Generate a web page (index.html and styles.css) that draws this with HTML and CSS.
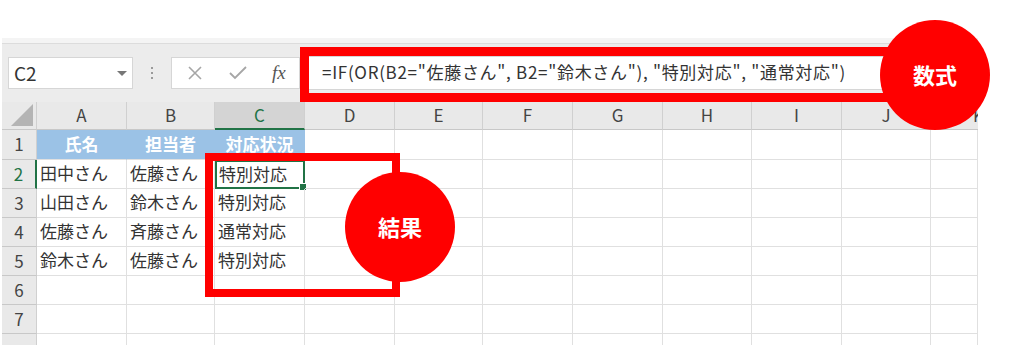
FILE: index.html
```html
<!DOCTYPE html>
<html lang="ja">
<head>
    <meta charset="UTF-8">
    <title>IF OR 数式</title>
    <link rel="stylesheet" href="styles.css">
</head>
<body>
    <div class="stage">
        <div class="sheet">
            <div class="ribbon-edge"></div>

            <div class="toolbar">
                <div class="name-box">
                    <span>C2</span>
                    <span class="name-arrow"></span>
                </div>
                <div class="grip"><i></i><i></i><i></i></div>
                <div class="fx-buttons">
                    <svg class="fx-icon" width="14" height="14" viewBox="0 0 14 14">
                        <path d="M1 1 L13 13 M13 1 L1 13" stroke="#a6a6a6" stroke-width="1.6" fill="none"/>
                    </svg>
                    <svg class="fx-icon" width="18" height="14" viewBox="0 0 18 14">
                        <path d="M1 7 L6 12 L17 1" stroke="#a6a6a6" stroke-width="1.8" fill="none"/>
                    </svg>
                    <span class="fx-label">fx</span>
                </div>
                <div class="formula-input">=IF(OR(B2="佐藤さん", B2="鈴木さん"), "特別対応", "通常対応")</div>
            </div>

            <div class="grid">
                <div class="corner"><span class="corner-tri"></span></div>
                <div class="col-head">A</div>
                <div class="col-head">B</div>
                <div class="col-head active">C</div>
                <div class="col-head">D</div>
                <div class="col-head">E</div>
                <div class="col-head">F</div>
                <div class="col-head">G</div>
                <div class="col-head">H</div>
                <div class="col-head">I</div>
                <div class="col-head">J</div>
                <div class="col-head clipped"><span>K</span></div>

                <div class="row-head">1</div>
                <div class="cell title-cell">氏名</div>
                <div class="cell title-cell">担当者</div>
                <div class="cell title-cell">対応状況</div>
                <div class="cell"></div><div class="cell"></div><div class="cell"></div><div class="cell"></div>
                <div class="cell"></div><div class="cell"></div><div class="cell"></div><div class="cell"></div>

                <div class="row-head active">2</div>
                <div class="cell">田中さん</div>
                <div class="cell">佐藤さん</div>
                <div class="cell selected">特別対応<span class="handle"></span></div>
                <div class="cell"></div><div class="cell"></div><div class="cell"></div><div class="cell"></div>
                <div class="cell"></div><div class="cell"></div><div class="cell"></div><div class="cell"></div>

                <div class="row-head">3</div>
                <div class="cell">山田さん</div>
                <div class="cell">鈴木さん</div>
                <div class="cell">特別対応</div>
                <div class="cell"></div><div class="cell"></div><div class="cell"></div><div class="cell"></div>
                <div class="cell"></div><div class="cell"></div><div class="cell"></div><div class="cell"></div>

                <div class="row-head">4</div>
                <div class="cell">佐藤さん</div>
                <div class="cell">斉藤さん</div>
                <div class="cell">通常対応</div>
                <div class="cell"></div><div class="cell"></div><div class="cell"></div><div class="cell"></div>
                <div class="cell"></div><div class="cell"></div><div class="cell"></div><div class="cell"></div>

                <div class="row-head">5</div>
                <div class="cell">鈴木さん</div>
                <div class="cell">佐藤さん</div>
                <div class="cell">特別対応</div>
                <div class="cell"></div><div class="cell"></div><div class="cell"></div><div class="cell"></div>
                <div class="cell"></div><div class="cell"></div><div class="cell"></div><div class="cell"></div>

                <div class="row-head">6</div>
                <div class="cell"></div><div class="cell"></div><div class="cell"></div><div class="cell"></div>
                <div class="cell"></div><div class="cell"></div><div class="cell"></div><div class="cell"></div>
                <div class="cell"></div><div class="cell"></div><div class="cell"></div>

                <div class="row-head">7</div>
                <div class="cell"></div><div class="cell"></div><div class="cell"></div><div class="cell"></div>
                <div class="cell"></div><div class="cell"></div><div class="cell"></div><div class="cell"></div>
                <div class="cell"></div><div class="cell"></div><div class="cell"></div>

                <div class="row-head"></div>
                <div class="cell"></div><div class="cell"></div><div class="cell"></div><div class="cell"></div>
                <div class="cell"></div><div class="cell"></div><div class="cell"></div><div class="cell"></div>
                <div class="cell"></div><div class="cell"></div><div class="cell"></div>
            </div>
        </div>

        <!-- annotations -->
        <div class="mark mark-formula"></div>
        <div class="mark mark-result"></div>
        <div class="badge badge-formula">数式</div>
        <div class="badge badge-result">結果</div>
    </div>
</body>
</html>
```

FILE: styles.css
```css
body {
    margin: 0;
    background: #ffffff;
    font-family: "Noto Sans CJK JP", "Noto Sans", sans-serif;
}

.stage {
    position: relative;
    width: 1024px;
    height: 345px;
    overflow: hidden;
}

.sheet {
    width: 976px;
    margin: 38px 0 0 2px;
    background: #ececec;
}

.ribbon-edge {
    height: 5px;
    background: #f4f4f4;
    border-bottom: 1px solid #dcdcdc;
}

.toolbar {
    display: flex;
    align-items: center;
    height: 58px;
    padding: 0 0 0 6px;
    box-sizing: border-box;
}

.name-box {
    width: 125px;
    height: 32px;
    box-sizing: border-box;
    background: #ffffff;
    border: 1px solid #d6d6d6;
    display: flex;
    align-items: center;
    justify-content: space-between;
    padding: 0 5px 2px 5px;
    font-size: 19px;
    color: #333333;
}

.name-arrow {
    width: 0;
    height: 0;
    border-left: 5px solid transparent;
    border-right: 5px solid transparent;
    border-top: 5px solid #777777;
    margin-top: 2px;
}

.grip {
    width: 38px;
    display: flex;
    flex-direction: column;
    align-items: center;
    gap: 3px;
}

.grip i {
    width: 2px;
    height: 2px;
    background: #9a9a9a;
}

.fx-buttons {
    width: 129px;
    height: 32px;
    box-sizing: border-box;
    background: #ffffff;
    border: 1px solid #d6d6d6;
    display: flex;
    align-items: center;
    gap: 27px;
    padding-left: 16px;
}

.fx-label {
    font-family: "Liberation Serif", serif;
    font-style: italic;
    font-size: 19px;
    color: #555555;
    margin-left: -2px;
}

.formula-input {
    flex: 1;
    height: 34px;
    margin-left: 3px;
    background: #ffffff;
    border: 1px solid #d6d6d6;
    box-sizing: border-box;
    padding: 0 0 3px 18px;
    display: flex;
    align-items: center;
    font-size: 17px;
    letter-spacing: 0.7px;
    color: #333333;
    white-space: nowrap;
    overflow: hidden;
}

.grid {
    display: grid;
    grid-template-columns: 35px 90px 88px 90px 90px 88px 90px 90px 89px 90px 89px 47px;
    grid-template-rows: 28px 30px 29px 29px 29px 29px 29px 29px 29px;
    background: #ffffff;
}

.corner,
.col-head,
.row-head {
    background: #e9e9e9;
    border-right: 1px solid #d0d0d0;
    border-bottom: 1px solid #c8c8c8;
    box-sizing: border-box;
    color: #444444;
    font-size: 17px;
    padding-bottom: 2px;
    display: flex;
    align-items: center;
    justify-content: center;
}

.corner {
    position: relative;
}

.corner-tri {
    position: absolute;
    right: 3px;
    bottom: 3px;
    width: 0;
    height: 0;
    border-left: 22px solid transparent;
    border-bottom: 22px solid #b4b4b4;
}

.col-head.clipped {
    justify-content: flex-end;
    overflow: hidden;
    border-right: none;
}

.col-head.clipped span {
    margin-right: -6px;
}

.col-head.active {
    background: #d4d4d4;
    color: #217346;
    border-bottom: 2px solid #217346;
}

.row-head.active {
    color: #217346;
    border-right: 2px solid #217346;
}

.cell {
    border-right: 1px solid #e0e0e0;
    border-bottom: 1px solid #e0e0e0;
    box-sizing: border-box;
    font-size: 17px;
    color: #333333;
    padding: 0 0 3px 3px;
    display: flex;
    align-items: center;
    white-space: nowrap;
    position: relative;
}

.title-cell {
    background: #9bc2e6;
    color: #ffffff;
    font-weight: bold;
    justify-content: center;
    padding-left: 0;
    border-right-color: #9bc2e6;
}

.cell.selected {
    border: 2px solid #217346;
    padding-left: 2px;
}

.handle {
    position: absolute;
    right: -4px;
    bottom: -4px;
    width: 6px;
    height: 6px;
    background: #217346;
    border: 1px solid #ffffff;
}

.mark {
    position: absolute;
    border: 9px solid #ff0000;
    box-sizing: border-box;
}

.mark-formula {
    left: 300px;
    top: 47px;
    width: 595px;
    height: 55px;
}

.mark-result {
    left: 205px;
    top: 153px;
    width: 195px;
    height: 144px;
    border-width: 8px;
}

.badge {
    position: absolute;
    width: 110px;
    height: 110px;
    border-radius: 50%;
    background: #ff0000;
    color: #ffffff;
    font-weight: bold;
    font-size: 22px;
    padding-bottom: 3px;
    box-sizing: border-box;
    display: flex;
    align-items: center;
    justify-content: center;
}

.badge-formula {
    left: 880px;
    top: 20px;
}

.badge-result {
    left: 345px;
    top: 172px;
}
```
